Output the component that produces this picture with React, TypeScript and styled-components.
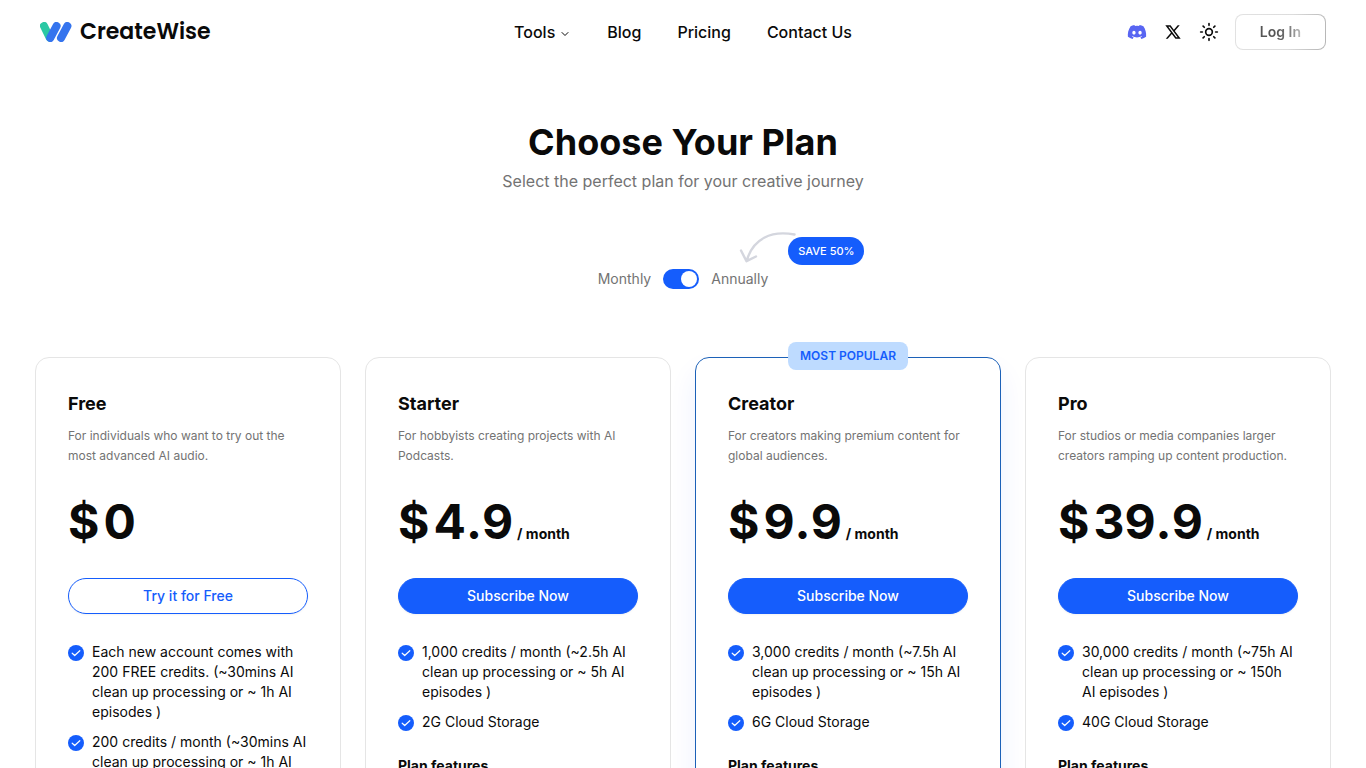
import React from "react";
import styled, { createGlobalStyle, css } from "styled-components";
import { ChevronDown, Sun } from "lucide-react";
import { FaDiscord } from "react-icons/fa6";
import { RiTwitterXLine } from "react-icons/ri";

const blue = "#155dfc";
const ink = "#0a0a0a";
const muted = "#737373";

const GlobalStyle = createGlobalStyle`
  *, *::before, *::after { box-sizing: border-box; }
  body {
    margin: 0;
    background: #fff;
    color: ${ink};
    font-family: Inter, "Liberation Sans", sans-serif;
    font-size: 14px;
    line-height: 20px;
  }
  h1, h2, h3, p, ul { margin: 0; padding: 0; }
  button { font: inherit; cursor: pointer; }
  a { color: inherit; text-decoration: none; }
`;

const Header = styled.header`
  display: grid;
  grid-template-columns: 1fr auto 1fr;
  align-items: center;
  height: 64px;
  padding: 0 40px;
`;

const Brand = styled.a`
  display: flex;
  align-items: center;
  gap: 8px;
  font-family: Poppins, Inter, sans-serif;
  font-size: 22px;
  line-height: 32px;
  font-weight: 600;
`;

const Nav = styled.nav`
  display: flex;
  align-items: center;
  gap: 36px;
  font-size: 16px;
  line-height: 24px;
  font-weight: 500;
`;

const MenuButton = styled.button`
  display: flex;
  align-items: center;
  gap: 4px;
  padding: 0;
  border: 0;
  background: none;
  color: inherit;

  svg { margin-top: 3px; }
`;

const Actions = styled.div`
  display: flex;
  align-items: center;
  justify-content: flex-end;
  gap: 16px;
`;

const iconBox = css`
  display: flex;
  align-items: center;
  justify-content: center;
  width: 20px;
  height: 20px;
`;

const IconLink = styled.a`
  ${iconBox}
`;

const IconButton = styled.button`
  ${iconBox}
  padding: 0;
  border: 0;
  background: none;
  color: inherit;
`;

const LoginButton = styled.button`
  height: 36px;
  padding: 0 24px;
  border: 1px solid transparent;
  border-radius: 8px;
  font-weight: 600;
  background: linear-gradient(#fff, #fff) padding-box,
    linear-gradient(100deg, #e2e2e2, #dcdcdc 60%, #b4b4b4) border-box;
`;

const LoginText = styled.span`
  background: linear-gradient(90deg, #555 40%, #777 70%, #bbb);
  background-clip: text;
  color: transparent;
`;

const Main = styled.main`
  max-width: 1344px;
  margin: 0 auto;
  padding: 56px 24px 64px;
`;

const Intro = styled.section`
  display: flex;
  flex-direction: column;
  align-items: center;
  text-align: center;
`;

const Title = styled.h1`
  font-size: 36px;
  line-height: 44px;
  font-weight: 700;
`;

const Subtitle = styled.p`
  margin-top: 5px;
  color: ${muted};
  font-size: 16px;
  line-height: 24px;
`;

const Billing = styled.div`
  display: flex;
  align-items: center;
  gap: 12px;
  margin-top: 76px;
  color: ${muted};
`;

const Switch = styled.input`
  appearance: none;
  display: flex;
  align-items: center;
  width: 36px;
  height: 20px;
  margin: 0;
  padding: 2px;
  border-radius: 10px;
  background: #d4d4d4;
  cursor: pointer;

  &::before {
    content: "";
    width: 16px;
    height: 16px;
    border-radius: 50%;
    background: #fff;
  }
  &:checked { background: ${blue}; justify-content: flex-end; }
`;

const Annual = styled.div`
  position: relative;
`;

const Promo = styled.div`
  position: absolute;
  left: 28px;
  bottom: 24px;
  display: flex;
  align-items: flex-end;
  height: 34px;
`;

const SaveBadge = styled.span`
  margin-left: -9px;
  padding: 4px 10px;
  border-radius: 14px;
  background: ${blue};
  color: #fff;
  font-size: 11px;
  line-height: 20px;
  font-weight: 500;
  white-space: nowrap;
`;

const Plans = styled.section`
  display: grid;
  grid-template-columns: repeat(4, 1fr);
  gap: 24px;
  margin-top: 68px;
`;

const Card = styled.article<{ $popular?: boolean }>`
  position: relative;
  padding: 32px;
  border: 1px solid ${(p) => (p.$popular ? "#1c61b8" : "#e5e5e5")};
  border-radius: 14px;
  box-shadow: ${(p) => (p.$popular ? "0 16px 28px rgba(21, 60, 252, 0.08)" : "none")};
`;

const PopularTag = styled.span`
  position: absolute;
  top: -16px;
  left: 50%;
  transform: translateX(-50%);
  padding: 4px 12px;
  border-radius: 8px;
  background: #bedbff;
  color: ${blue};
  font-size: 12px;
  line-height: 20px;
  font-weight: 600;
  white-space: nowrap;
`;

const PlanName = styled.h2`
  font-size: 18px;
  line-height: 28px;
  font-weight: 700;
`;

const PlanText = styled.p`
  min-height: 40px;
  margin-top: 8px;
  color: ${muted};
  font-size: 12px;
  line-height: 20px;
`;

const Price = styled.p`
  display: flex;
  align-items: baseline;
  gap: 4px;
  margin-top: 32px;
  font-size: 48px;
  line-height: 48px;
  font-weight: 700;
  font-kerning: none;
`;

const Period = styled.span`
  font-size: 14px;
  line-height: 20px;
  font-weight: 700;
`;

const PlanButton = styled.button<{ $outline?: boolean }>`
  width: 100%;
  height: 36px;
  margin-top: 32px;
  border: 1px solid ${blue};
  border-radius: 18px;
  background: ${(p) => (p.$outline ? "#fff" : blue)};
  color: ${(p) => (p.$outline ? blue : "#fff")};
  font-weight: 500;
  box-shadow: 0 1px 2px rgba(0, 0, 0, 0.05);
`;

const Perks = styled.ul`
  display: grid;
  gap: 10px;
  margin-top: 28px;
  list-style: none;
`;

const Perk = styled.li`
  display: flex;
  gap: 8px;
`;

const Tick = styled.svg`
  flex: none;
  width: 16px;
  height: 16px;
  margin-top: 3px;
`;

const FeaturesTitle = styled.h3`
  margin-top: 24px;
  font-size: 14px;
  line-height: 20px;
  font-weight: 700;
`;

interface Plan {
  name: string;
  text: string;
  price: string;
  period?: boolean;
  popular?: boolean;
  perks: string[];
}

const plans: Plan[] = [
  {
    name: "Free",
    text: "For individuals who want to try out the most advanced AI audio.",
    price: "0",
    perks: [
      "Each new account comes with 200 FREE credits. (~30mins AI clean up processing or ~ 1h AI episodes )",
      "200 credits / month (~30mins AI clean up processing or ~ 1h AI episodes )",
    ],
  },
  {
    name: "Starter",
    text: "For hobbyists creating projects with AI Podcasts.",
    price: "4.9",
    period: true,
    perks: ["1,000 credits / month (~2.5h AI clean up processing or ~ 5h AI episodes )", "2G Cloud Storage"],
  },
  {
    name: "Creator",
    text: "For creators making premium content for global audiences.",
    price: "9.9",
    period: true,
    popular: true,
    perks: ["3,000 credits / month (~7.5h AI clean up processing or ~ 15h AI episodes )", "6G Cloud Storage"],
  },
  {
    name: "Pro",
    text: "For studios or media companies larger creators ramping up content production.",
    price: "39.9",
    period: true,
    perks: ["30,000 credits / month (~75h AI clean up processing or ~ 150h AI episodes )", "40G Cloud Storage"],
  },
];

function Logo() {
  return (
    <svg width="32" height="20" viewBox="0 0 32 20" fill="none" strokeLinecap="round" strokeWidth="8" aria-hidden="true">
      <path d="M4 4 9.600 15.500" stroke="#2bc8a4" />
      <path d="M10.200 16 16.600 4M21 16 27.400 4" stroke="#3574ee" />
    </svg>
  );
}

function Arrow() {
  return (
    <svg width="58" height="34" viewBox="0 0 58 34" fill="none" stroke="#d4d6de" strokeWidth="2.4" strokeLinecap="round" strokeLinejoin="round" aria-hidden="true">
      <path d="M55.500 3.500C32-1 14 8 8 29M2 19.500l5.500 10.700 9.500-4.700" />
    </svg>
  );
}

function PlanCard({ plan }: { plan: Plan }) {
  return (
    <Card $popular={plan.popular}>
      {plan.popular && <PopularTag>MOST POPULAR</PopularTag>}
      <PlanName>{plan.name}</PlanName>
      <PlanText>{plan.text}</PlanText>
      <Price>
        <span>$</span>
        <span>{plan.price}</span>
        {plan.period && <Period>/ month</Period>}
      </Price>
      <PlanButton $outline={!plan.period}>{plan.period ? "Subscribe Now" : "Try it for Free"}</PlanButton>
      <Perks>
        {plan.perks.map((perk) => (
          <Perk key={perk}>
            <Tick viewBox="0 0 16 16" fill="none" aria-hidden="true">
              <circle cx="8" cy="8" r="8" fill={blue} />
              <path d="m4.200 8.200 2.500 2.300L11.800 5.700" stroke="#fff" strokeWidth="1.2" strokeLinecap="round" strokeLinejoin="round" />
            </Tick>
            <span>{perk}</span>
          </Perk>
        ))}
      </Perks>
      <FeaturesTitle>Plan features</FeaturesTitle>
    </Card>
  );
}

export default function App() {
  const [annual, setAnnual] = React.useState(true);
  return (
    <>
      <GlobalStyle />
      <Header>
        <Brand href="#">
          <Logo />
          CreateWise
        </Brand>
        <Nav>
          <MenuButton>
            Tools
            <ChevronDown size={12} />
          </MenuButton>
          <a href="#blog">Blog</a>
          <a href="#pricing">Pricing</a>
          <a href="#contact">Contact Us</a>
        </Nav>
        <Actions>
          <IconLink href="#discord" aria-label="Discord">
            <FaDiscord size={20} color="#5865f2" />
          </IconLink>
          <IconLink href="#x" aria-label="X">
            <RiTwitterXLine size={18} />
          </IconLink>
          <IconButton aria-label="Toggle theme">
            <Sun size={20} />
          </IconButton>
          <LoginButton>
            <LoginText>Log In</LoginText>
          </LoginButton>
        </Actions>
      </Header>
      <Main>
        <Intro>
          <Title>Choose Your Plan</Title>
          <Subtitle>Select the perfect plan for your creative journey</Subtitle>
          <Billing>
            <label htmlFor="billing">Monthly</label>
            <Switch
              id="billing"
              type="checkbox"
              role="switch"
              checked={annual}
              onChange={(e) => setAnnual(e.target.checked)}
            />
            <Annual>
              <label htmlFor="billing">Annually</label>
              <Promo>
                <Arrow />
                <SaveBadge>SAVE 50%</SaveBadge>
              </Promo>
            </Annual>
          </Billing>
        </Intro>
        <Plans>
          {plans.map((plan) => (
            <PlanCard key={plan.name} plan={plan} />
          ))}
        </Plans>
      </Main>
    </>
  );
}
